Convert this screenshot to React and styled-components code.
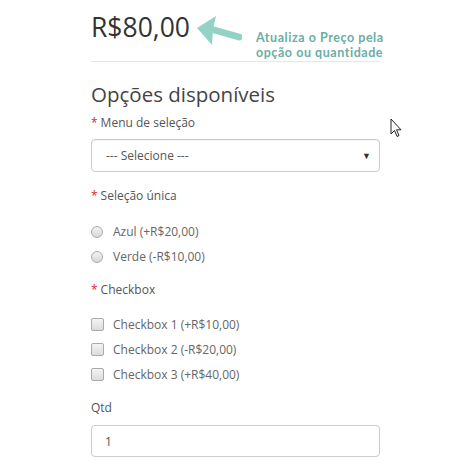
import React from 'react'
import styled, { createGlobalStyle } from 'styled-components'

const GlobalStyle = createGlobalStyle`
  html, body {
    margin: 0;
    padding: 0;
    background: #fff;
  }
  body {
    font-family: "Open Sans", "Liberation Sans", sans-serif;
  }
`

const Page = styled.div`
  position: relative;
  width: 474px;
  height: 474px;
  overflow: hidden;
  padding-left: 91px;
  box-sizing: border-box;
`

const Form = styled.div`
  width: 289px;
  display: flex;
  flex-direction: column;
`

const PriceRow = styled.div`
  display: flex;
  align-items: flex-start;
  height: 61px;
  border-bottom: 1px solid #e6e6e6;
`

const Price = styled.div`
  padding-top: 12px;
  font-size: 26.5px;
  line-height: 30px;
  color: #333;
  white-space: nowrap;
`

const Arrow = styled.svg`
  margin-top: 15px;
  margin-left: 6px;
  flex-shrink: 0;
`

const Note = styled.div`
  padding-top: 30px;
  margin-left: 14px;
  font-family: Lato, "Open Sans", sans-serif;
  font-weight: 700;
  font-size: 12.5px;
  line-height: 15px;
  letter-spacing: 0.55px;
  color: #6aaea6;
  white-space: nowrap;
`

const Heading = styled.h3`
  margin: 17px 0 5px;
  font-size: 20.5px;
  font-weight: 400;
  line-height: 30px;
  color: #444;
`

const Label = styled.div`
  font-size: 12px;
  line-height: 18px;
  color: #555;
  margin-top: ${p => p.$top || 0}px;
  margin-bottom: ${p => p.$bottom || 0}px;
`

const Star = styled.span`
  color: #e0242c;
  margin-right: 3px;
`

const Select = styled.div`
  height: 33px;
  box-sizing: border-box;
  border: 1px solid #ccc;
  border-radius: 4px;
  display: flex;
  align-items: center;
  justify-content: space-between;
  padding: 0 8px 0 14px;
  font-size: 12px;
  color: #555;
  box-shadow: inset 0 1px 1px rgba(0, 0, 0, 0.05);
`

const Caret = styled.span`
  font-size: 9px;
  color: #333;
`

const Options = styled.div`
  display: flex;
  flex-direction: column;
  margin-top: ${p => p.$top}px;
`

const Option = styled.div`
  display: flex;
  align-items: center;
  height: 25px;
  font-size: 12px;
  color: #666;
`

const Radio = styled.span`
  width: 10px;
  height: 10px;
  border-radius: 50%;
  border: 1px solid #aaa;
  background: linear-gradient(#f2f2f2, #d8d8d8);
  margin: 0 10px 0 0;
  flex-shrink: 0;
`

const Check = styled.span`
  width: 11px;
  height: 11px;
  border-radius: 2px;
  border: 1px solid #aaa;
  background: linear-gradient(#f4f4f4, #dcdcdc);
  margin: 0 9px 0 0;
  flex-shrink: 0;
`

const Input = styled.div`
  margin-top: 8px;
  height: 32px;
  box-sizing: border-box;
  border: 1px solid #ccc;
  border-radius: 4px;
  display: flex;
  align-items: center;
  padding-left: 13px;
  font-size: 12px;
  color: #555;
`

const Cursor = styled.svg`
  position: absolute;
  left: 390px;
  top: 118px;
`

const radios = ['Azul (+R$20,00)', 'Verde (-R$10,00)']
const checks = ['Checkbox 1 (+R$10,00)', 'Checkbox 2 (-R$20,00)', 'Checkbox 3 (+R$40,00)']

export default function App() {
  return (
    <Page>
      <GlobalStyle />
      <Form>
        <PriceRow>
          <Price>R$80,00</Price>
          <Arrow width="46" height="32" viewBox="0 0 46 32">
            <path d="M43 22 L18 15" stroke="#93d3c6" strokeWidth="7" strokeLinecap="round" />
            <path d="M1 13 L20 1 L17 14 L16 30 Z" fill="#93d3c6" />
          </Arrow>
          <Note>
            Atualiza o Preço pela
            <br />
            opção ou quantidade
          </Note>
        </PriceRow>

        <Heading>Opções disponíveis</Heading>

        <Label $bottom={7}><Star>*</Star>Menu de seleção</Label>
        <Select>
          --- Selecione ---
          <Caret>▼</Caret>
        </Select>

        <Label $top={15}><Star>*</Star>Seleção única</Label>
        <Options $top={14}>
          {radios.map(r => (
            <Option key={r}><Radio />{r}</Option>
          ))}
        </Options>

        <Label $top={12}><Star>*</Star>Checkbox</Label>
        <Options $top={13}>
          {checks.map(c => (
            <Option key={c}><Check />{c}</Option>
          ))}
        </Options>

        <Label $top={12}>Qtd</Label>
        <Input>1</Input>
      </Form>

      <Cursor width="12" height="20" viewBox="0 0 12 20">
        <path d="M1 1 L1 16 L4.5 12.5 L7 18.5 L9 17.5 L6.5 11.8 L11 11.8 Z" fill="#fff" stroke="#222" strokeWidth="1" strokeLinejoin="round" />
      </Cursor>
    </Page>
  )
}
